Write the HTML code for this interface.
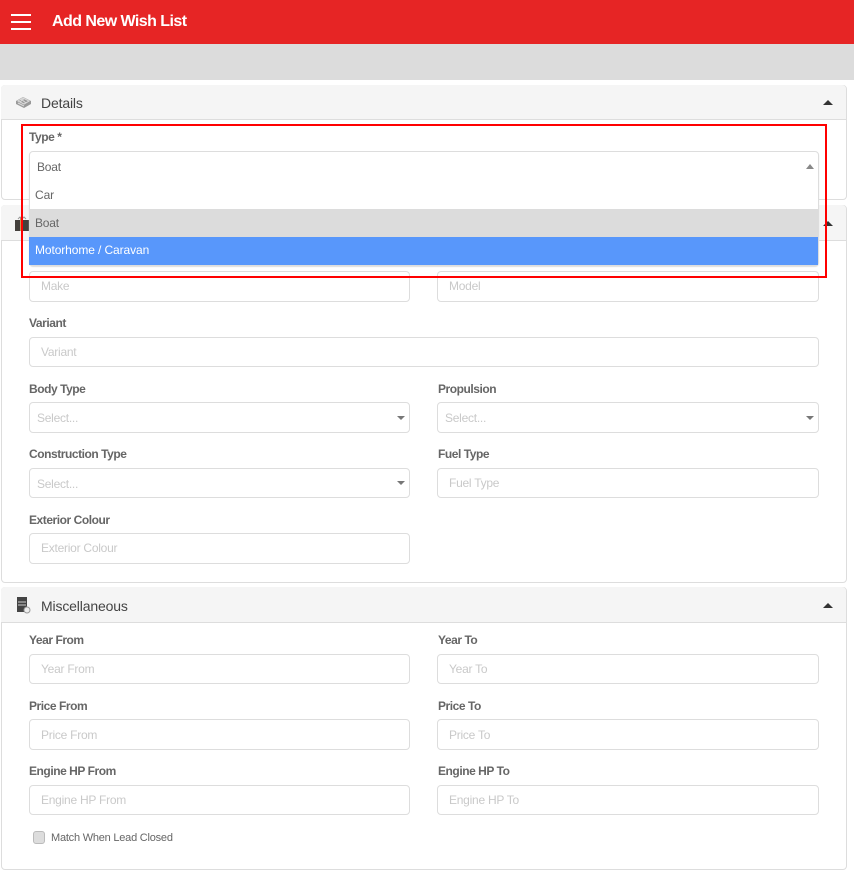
<!DOCTYPE html>
<html><head><meta charset="utf-8"><style>
html,body{margin:0;padding:0;width:854px;height:875px;overflow:hidden;background:#fff;font-family:"Liberation Sans",sans-serif}
div,svg{position:absolute;box-sizing:border-box}
.panel{left:1px;width:846px;border:1px solid #ddd;border-radius:4px;background:#fff}
.head{left:1px;width:845px;background:#f5f5f5;border-bottom:1px solid #ddd;border-radius:4px 4px 0 0;height:36px}
.ht{left:41px;font-size:14px;letter-spacing:-.15px;color:#444;line-height:18px;white-space:nowrap}
.lb{font-size:12px;font-weight:bold;letter-spacing:-.45px;color:#666;line-height:14px;white-space:nowrap}
.in{border:1px solid #ddd;border-radius:4px;background:#fff;height:31px;font-size:12px;letter-spacing:-.25px;color:#c9c9c9;line-height:29px;padding-left:11px;white-space:nowrap}
.l{left:29px;width:381px}.r{left:437px;width:382px}.f{left:29px;width:790px}
.sel{padding-left:7px;line-height:30px}
.ar{width:0;height:0;border-left:4px solid transparent;border-right:4px solid transparent;border-top:4px solid #777}
.up{width:0;height:0;border-left:5px solid transparent;border-right:5px solid transparent;border-bottom:5px solid #333}
.opt{left:29px;width:789px;height:28px;font-size:12px;line-height:28px;padding-left:6px;color:#666}
</style></head><body>
<div style="left:0;top:0;width:854px;height:44px;background:#e62525"></div>
<div style="left:11px;top:14px;width:20px;height:2px;background:#fff"></div>
<div style="left:11px;top:21px;width:20px;height:2px;background:#fff"></div>
<div style="left:11px;top:28px;width:20px;height:2px;background:#fff"></div>
<div style="left:52px;top:12px;font-size:16px;font-weight:bold;letter-spacing:-.55px;color:#fff;line-height:19px;white-space:nowrap">Add New Wish List</div>
<div style="left:0;top:44px;width:854px;height:36px;background:#dcdcdc"></div>

<div class="panel" style="top:85px;height:115px"></div>
<div class="head" style="top:85px;height:35px"></div>
<svg style="left:15px;top:96px" width="17" height="13" viewBox="0 0 17 13"><path d="M8 1L16 5V8L9 12L1 8V5Z" fill="#999"/><path d="M8 2L14 5L9 8L3 5ZM3 7L9 10M6 3L11 7M9 2.500L5 6" stroke="#ddd" fill="none"/></svg>
<div class="ht" style="top:94px">Details</div>
<div class="up" style="left:823px;top:100px"></div>

<div class="panel" style="top:205px;height:378px"></div>
<div class="head" style="top:205px;height:36px"></div>
<svg style="left:14px;top:216px" width="17" height="16" viewBox="0 0 17 16"><path d="M1 4H16V15H1Z" fill="#44403c"/><path d="M7 1V15" stroke="#c89a55" stroke-width="2"/><path d="M4 3L6 1L8 3L10 1L12 3" stroke="#999" fill="none"/></svg>
<div class="up" style="left:823px;top:221px"></div>

<div class="in l" style="top:271px">Make</div>
<div class="in r" style="top:271px">Model</div>
<div class="lb" style="left:29px;top:316px">Variant</div>
<div class="in f" style="top:337px;height:30px">Variant</div>
<div class="lb" style="left:29px;top:382px">Body Type</div>
<div class="lb" style="left:438px;top:382px">Propulsion</div>
<div class="in l sel" style="top:402px">Select...</div><div class="ar" style="left:397px;top:416px"></div>
<div class="in r sel" style="top:402px">Select...</div><div class="ar" style="left:806px;top:416px"></div>
<div class="lb" style="left:29px;top:447px">Construction Type</div>
<div class="lb" style="left:438px;top:447px">Fuel Type</div>
<div class="in l sel" style="top:468px;height:30px">Select...</div><div class="ar" style="left:397px;top:481px"></div>
<div class="in r" style="top:468px;height:30px">Fuel Type</div>
<div class="lb" style="left:29px;top:513px">Exterior Colour</div>
<div class="in l" style="top:533px">Exterior Colour</div>

<div class="panel" style="top:587px;height:283px"></div>
<div class="head" style="top:587px;height:36px"></div>
<svg style="left:16px;top:597px" width="15" height="17" viewBox="0 0 15 17"><path d="M1 0H11V15H1Z" fill="#444"/><path d="M2 5H10M2 8H10" stroke="#ccc"/><circle cx="11" cy="13" r="3" fill="#eee" stroke="#999"/></svg>
<div class="ht" style="top:597px">Miscellaneous</div>
<div class="up" style="left:823px;top:603px"></div>

<div class="lb" style="left:29px;top:633px">Year From</div>
<div class="lb" style="left:438px;top:633px">Year To</div>
<div class="in l" style="top:654px;height:30px">Year From</div>
<div class="in r" style="top:654px;height:30px">Year To</div>
<div class="lb" style="left:29px;top:699px">Price From</div>
<div class="lb" style="left:438px;top:699px">Price To</div>
<div class="in l" style="top:719px;line-height:30px">Price From</div>
<div class="in r" style="top:719px;line-height:30px">Price To</div>
<div class="lb" style="left:29px;top:764px">Engine HP From</div>
<div class="lb" style="left:438px;top:764px">Engine HP To</div>
<div class="in l" style="top:785px;height:30px">Engine HP From</div>
<div class="in r" style="top:785px;height:30px">Engine HP To</div>
<div style="left:33px;top:831px;width:12px;height:13px;border:1px solid #bbb;border-radius:3px;background:#ddd"></div>
<div style="left:51px;top:831px;font-size:11px;letter-spacing:-.22px;line-height:14px;color:#666;white-space:nowrap">Match When Lead Closed</div>

<div class="lb" style="left:29px;top:130px">Type *</div>
<div style="left:29px;top:151px;width:790px;height:115px;background:#fff;border:1px solid #ddd;border-radius:4px;box-shadow:0 1px 1px #ddd"></div>
<div style="left:37px;top:160px;font-size:12px;letter-spacing:-.2px;line-height:14px;color:#666">Boat</div>
<div class="up" style="left:806px;top:164px;border-left-width:4px;border-right-width:4px;border-bottom-width:5px;border-bottom-color:#888"></div>
<div class="opt" style="top:181px;letter-spacing:-.1px">Car</div>
<div class="opt" style="top:209px;background:#dcdcdc;letter-spacing:-.2px">Boat</div>
<div class="opt" style="top:237px;background:#5897fb;color:#fff;line-height:26px;letter-spacing:-.1px">Motorhome / Caravan</div>
<div style="left:21px;top:124px;width:806px;height:154px;border:2px solid #f00"></div>
</body></html>
